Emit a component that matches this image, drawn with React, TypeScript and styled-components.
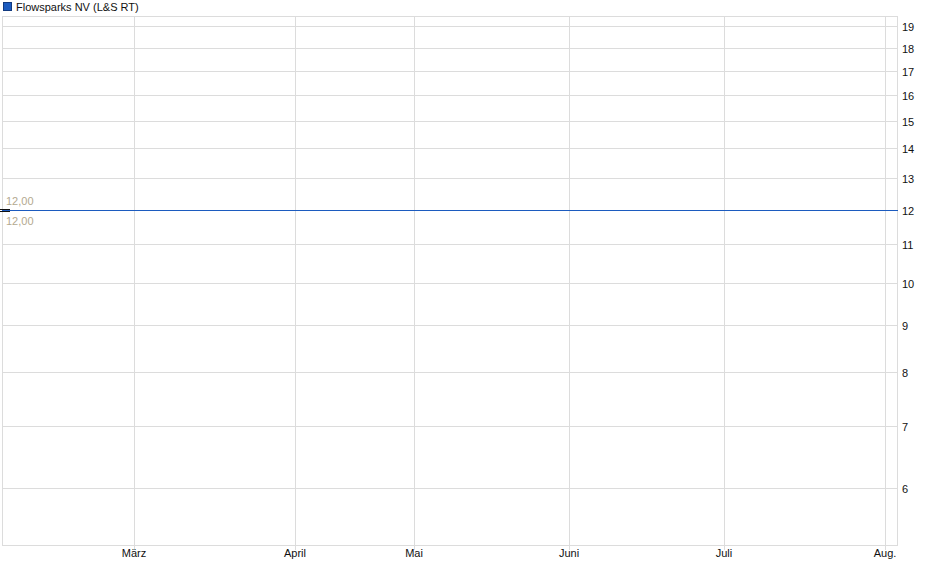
import React from 'react';
import styled, { createGlobalStyle } from 'styled-components';

const Global = createGlobalStyle`
  body { margin: 0; background: #fff; font-family: "Liberation Sans", Arial, sans-serif; }
`;

const Page = styled.div`
  width: 940px;
  height: 579px;
  position: relative;
`;

const Legend = styled.div`
  display: flex;
  align-items: center;
  gap: 4px;
  height: 13px;
  padding: 0 0 0 3px;
  font-size: 11px;
  color: #111;
`;

const Swatch = styled.span`
  width: 7px;
  height: 7px;
  background: #1c5bbf;
  border: 1px solid #123a80;
`;

const Chart = styled.svg`
  display: block;
  font-family: "Liberation Sans", Arial, sans-serif;
  font-size: 11px;
`;

const yTicks: [string, number][] = [
  ['19', 26], ['18', 48], ['17', 71], ['16', 95], ['15', 121], ['14', 148], ['13', 178],
  ['12', 210], ['11', 244], ['10', 283], ['9', 325], ['8', 372], ['7', 426], ['6', 488],
];
const xTicks: [string, number][] = [
  ['März', 134], ['April', 295], ['Mai', 414], ['Juni', 569], ['Juli', 724], ['Aug.', 885],
];

export default function App() {
  const off = 13;
  return (
    <Page>
      <Global />
      <Legend>
        <Swatch />
        Flowsparks NV (L&amp;S RT)
      </Legend>
      <Chart width={940} height={566} viewBox={`0 ${off} 940 566`}>
        {yTicks.map(([l, y]) => (
          <g key={l}>
            <line x1={2} x2={898} y1={y + 0.5} y2={y + 0.5} stroke="#dcdcdc" />
            <text x={902} y={y + 5} fill="#111">{l}</text>
          </g>
        ))}
        {xTicks.map(([l, x]) => (
          <g key={l}>
            <line x1={x + 0.5} x2={x + 0.5} y1={16} y2={550} stroke="#dcdcdc" />
            <text x={x} y={557} fill="#111" textAnchor="middle">{l}</text>
          </g>
        ))}
        <rect x={2.5} y={16.5} width={895} height={529} fill="none" stroke="#dcdcdc" />
        <line x1={2} x2={898} y1={210.5} y2={210.5} stroke="#1c5bbf" />
        <rect x={0} y={209} width={10} height={1} fill="#111" />
        <rect x={0} y={211} width={10} height={1} fill="#111" />
        <text x={6} y={205} fill="#b3a98f">12,00</text>
        <text x={6} y={225} fill="#b3a98f">12,00</text>
      </Chart>
    </Page>
  );
}
